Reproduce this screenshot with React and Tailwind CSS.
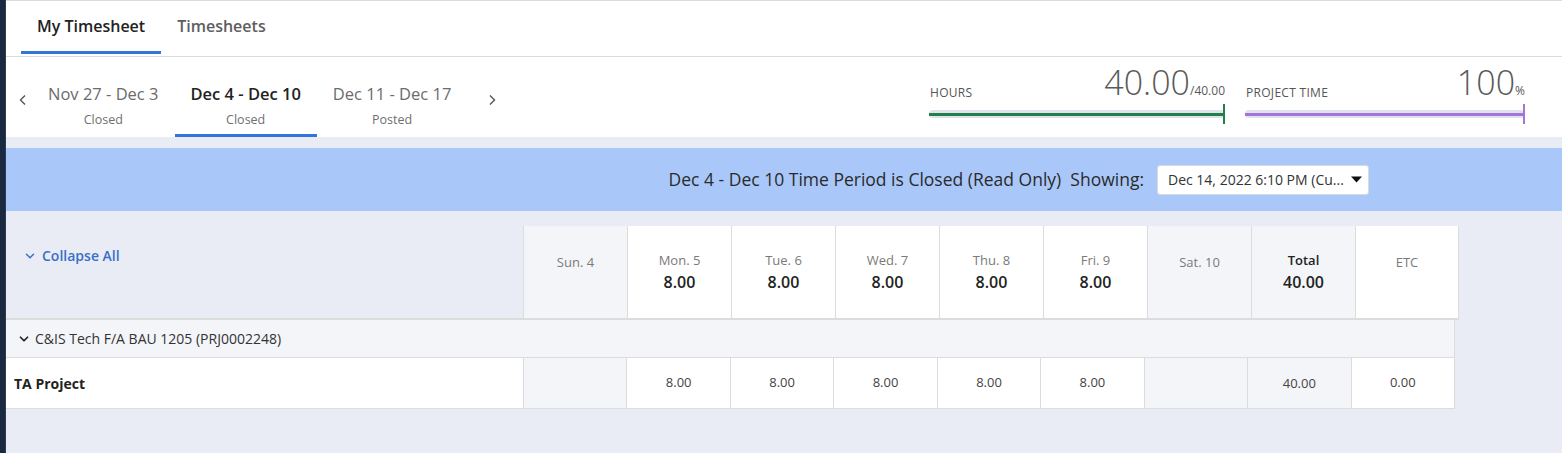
import { ChevronDown } from "lucide-react";

const days = [
  { label: "Sun. 4", value: null, shade: true },
  { label: "Mon. 5", value: "8.00" },
  { label: "Tue. 6", value: "8.00" },
  { label: "Wed. 7", value: "8.00" },
  { label: "Thu. 8", value: "8.00" },
  { label: "Fri. 9", value: "8.00" },
  { label: "Sat. 10", value: null, shade: true },
];

const periods = [
  { range: "Nov 27 - Dec 3", status: "Closed" },
  { range: "Dec 4 - Dec 10", status: "Closed", active: true },
  { range: "Dec 11 - Dec 17", status: "Posted" },
];

const Chevron = ({ dir }) => (
  <svg width="8" height="12" viewBox="0 0 8 12" fill="none">
    <polyline
      points={dir === "left" ? "6,1.5 1.5,6 6,10.5" : "2,1.5 6.5,6 2,10.5"}
      stroke="#555"
      strokeWidth="1.4"
    />
  </svg>
);

const Metric = ({ label, value, unit, width, color }) => (
  <div className={width}>
    <div className="flex items-end justify-between">
      <span className="text-[12px] tracking-[0.3px] text-[#555] uppercase -mb-[2px] ml-[1px]">
        {label}
      </span>
      <span className="flex items-baseline text-[#595959]">
        <span className="text-[34px] leading-[34px] font-light">{value}</span>
        <span className="text-[12px]">{unit}</span>
      </span>
    </div>
    <div className="flex items-center mt-[4px]">
      <div className="flex-1 h-[8px] rounded-full bg-[#dfe3ec] flex items-center">
        <div className={`w-full h-[3px] ${color}`} />
      </div>
      <div className={`w-[2px] h-[20px] -ml-[2px] ${color}`} />
    </div>
  </div>
);

export default function App() {
  return (
    <div className="flex h-[453px] bg-[#e9ecf4] font-['Open_Sans',sans-serif] text-[#333]">
      <div className="w-[6px] bg-[#1b2940] border-r border-[#2c3b57]" />

      <div className="flex-1 flex flex-col">
        {/* Header */}
        <div className="bg-white border-t border-[#dcdcdc]">
          <div className="h-[56px] border-b border-[#dcdcdc] flex pl-[15px]">
            <div className="h-[53px] px-4 flex items-center border-b-[3px] border-[#3274d8] text-[16px] font-semibold text-[#222]">
              My Timesheet
            </div>
            <div className="h-[53px] px-4 flex items-center border-b-[3px] border-transparent text-[16px] font-semibold text-[#5e5e5e]">
              Timesheets
            </div>
          </div>

          <div className="h-[80px] flex">
            <div className="flex items-center">
              <div className="w-[26px] pl-[13px] pt-[6px]">
                <Chevron dir="left" />
              </div>
              {periods.map((p) => (
                <div
                  key={p.range}
                  className={`h-[80px] px-4 pt-[26px] flex flex-col items-center border-b-[3px] ${
                    p.active ? "border-[#3274d8]" : "border-transparent"
                  }`}
                >
                  <span
                    className={`text-[16.5px] leading-[22px] ${
                      p.active ? "text-[#222] font-semibold" : "text-[#6b6b6b]"
                    }`}
                  >
                    {p.range}
                  </span>
                  <span className="text-[12.5px] leading-[17px] mt-[6px] text-[#6f6f6f]">
                    {p.status}
                  </span>
                </div>
              ))}
              <div className="ml-[21px] pt-[6px]">
                <Chevron dir="right" />
              </div>
            </div>

            <div className="ml-auto flex gap-[20px] pt-[8px] pr-[37px]">
              <Metric
                label="Hours"
                value="40.00"
                unit="/40.00"
                width="w-[296px]"
                color="bg-[#23804a]"
              />
              <Metric
                label="Project Time"
                value="100"
                unit="%"
                width="w-[280px]"
                color="bg-[#a673d6]"
              />
            </div>
          </div>
        </div>

        {/* Read only banner */}
        <div className="mt-[11px] h-[63px] bg-[#a9c8f9] flex items-center justify-end pr-[193px]">
          <span className="text-[17.5px] text-[#2a2a2a]">
            Dec 4 - Dec 10 Time Period is Closed (Read Only)&nbsp;&nbsp;Showing:
          </span>
          <div className="ml-[13px] w-[212px] h-[30px] bg-white rounded-[3px] border border-[#d6dbe3] flex items-center pl-[10px] pr-[6px]">
            <span className="text-[14px] text-[#333] whitespace-nowrap">
              Dec 14, 2022 6:10 PM (Cu...
            </span>
            <svg className="ml-auto" width="11" height="7" viewBox="0 0 11 7">
              <polygon points="0,0.5 11,0.5 5.5,6.5" fill="#111" />
            </svg>
          </div>
        </div>

        {/* Grid */}
        <div className="mt-[15px] w-[1453px]">
          <div className="grid grid-cols-[517px_repeat(9,1fr)] border-b-2 border-[#dcdcdc]">
            <div className="pt-[19px] pl-[17px] flex items-start">
              <button className="flex items-center gap-[5px] text-[14px] font-semibold text-[#3b6fc8]">
                <ChevronDown size={14} strokeWidth={2.5} />
                Collapse All
              </button>
            </div>
            {days.map((d) => (
              <div
                key={d.label}
                className={`h-[92px] border-l border-[#dcdcdc] flex flex-col items-center ${
                  d.value ? "pt-[25px]" : "pt-[27px]"
                } ${d.shade ? "bg-[#f4f5f9]" : "bg-white"}`}
              >
                <span className="text-[13px] text-[#7a7a7a]">{d.label}</span>
                {d.value && (
                  <span className="text-[16px] font-semibold text-[#222] leading-[22px]">
                    {d.value}
                  </span>
                )}
              </div>
            ))}
            <div className="h-[92px] border-l border-[#dcdcdc] bg-[#f4f5f9] flex flex-col items-center pt-[25px]">
              <span className="text-[13px] font-semibold text-[#222]">Total</span>
              <span className="text-[16px] font-semibold text-[#222] leading-[22px]">
                40.00
              </span>
            </div>
            <div className="h-[92px] border-x border-[#dcdcdc] bg-white flex flex-col items-center pt-[27px]">
              <span className="text-[13px] text-[#7a7a7a]">ETC</span>
            </div>
          </div>

          <div className="w-[1449px] border-r border-[#dcdcdc]">
            <div className="h-[38px] bg-[#f4f5f9] border-b border-[#dcdcdc] flex items-center pl-[11px] gap-[4px]">
              <ChevronDown size={14} strokeWidth={3} className="text-[#222]" />
              <span className="text-[14px] text-[#333]">
                C&amp;IS Tech F/A BAU 1205 (PRJ0002248)
              </span>
            </div>
            <div className="grid grid-cols-[517px_repeat(9,1fr)] h-[51px] border-b border-[#dcdcdc] bg-white">
              <div className="flex items-center pl-[8px] text-[14px] font-bold text-[#222]">
                TA Project
              </div>
              {days.map((d) => (
                <div
                  key={d.label}
                  className={`border-l border-[#dcdcdc] flex items-center justify-center text-[13px] text-[#444] ${
                    d.shade ? "bg-[#f4f5f9]" : "bg-white"
                  }`}
                >
                  {d.value}
                </div>
              ))}
              <div className="border-l border-[#dcdcdc] bg-[#f4f5f9] flex items-center justify-center text-[13px] text-[#444] pt-[2px]">
                40.00
              </div>
              <div className="border-l border-[#dcdcdc] bg-white flex items-center justify-center text-[13px] text-[#444]">
                0.00
              </div>
            </div>
          </div>
        </div>
      </div>
    </div>
  );
}
